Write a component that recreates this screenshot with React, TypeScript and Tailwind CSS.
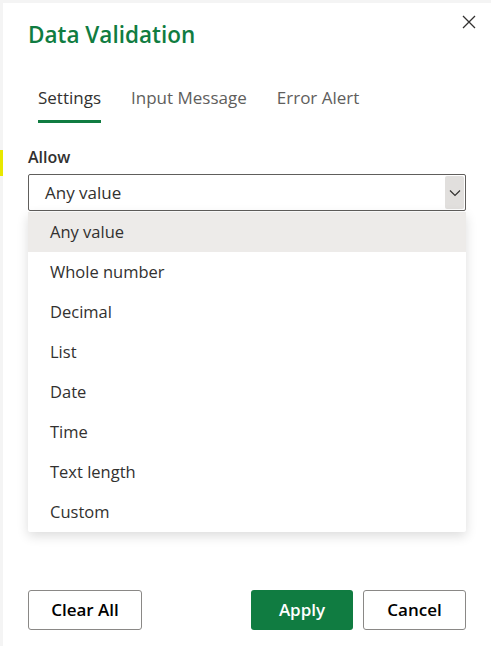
import { useState } from 'react';

const options = ['Any value', 'Whole number', 'Decimal', 'List', 'Date', 'Time', 'Text length', 'Custom'];

export default function App() {
  const [selected] = useState('Any value');

  return (
    <div className="flex h-[646px] w-[491px] overflow-hidden bg-[#f4f4f4] font-['Open_Sans',sans-serif] text-[#323130]">
      {/* sheet sliver behind the dialog */}
      <div className="flex w-[3px] shrink-0 flex-col">
        <div className="h-[150px]" />
        <div className="h-[26px] bg-[#e8e800]" />
      </div>
      <div className="mt-[3px] flex flex-1 flex-col bg-white pl-[25px] pr-[25px]">
        <div className="flex items-start justify-between">
          <h1 className="pt-[16px] text-[22.5px] font-semibold leading-[32px] text-[#107c41]">Data Validation</h1>
          <button className="mr-[-13px] mt-[9px] p-[2px] text-[#323130]">
            <svg width="16" height="16" viewBox="0 0 16 16" fill="none" stroke="currentColor" strokeWidth="1.3">
              <path d="M2 2L14 14M14 2L2 14" />
            </svg>
          </button>
        </div>

        {/* tabs */}
        <div className="mt-[35px] flex gap-[30px] pl-[10px] text-[17px]">
          <div className="flex flex-col">
            <span className="leading-[24px] text-[#323130]">Settings</span>
            <div className="mt-[10px] h-[3px] bg-[#107c41]" />
          </div>
          <span className="leading-[24px] text-[#605e5c]">Input Message</span>
          <span className="leading-[24px] text-[#605e5c]">Error Alert</span>
        </div>

        <div className="mt-[23px] text-[16px] font-semibold leading-[22px]">Allow</div>

        <div className="relative mt-[6px]">
          <div className="flex h-[37px] items-center justify-between rounded-[2px] border border-[#605e5c] bg-white pl-[16px] pr-[1px]">
            <span className="text-[17px]">{selected}</span>
            <div className="flex h-[33px] w-[19px] items-center justify-center rounded-[2px] bg-[#e1dfdd]">
              <svg width="12" height="8" viewBox="0 0 12 8" fill="none" stroke="#323130" strokeWidth="1.2">
                <path d="M1 1.5L6 6.5L11 1.5" />
              </svg>
            </div>
          </div>

          {/* dropdown list */}
          <div className="absolute left-0 right-0 top-[38px] z-10 flex flex-col rounded-b-[2px] bg-white shadow-[0_4px_12px_rgba(0,0,0,0.14)]">
            {options.map((opt) => (
              <div
                key={opt}
                className={`flex h-[40px] items-center pl-[22px] text-[16.5px] ${opt === selected ? 'bg-[#edebe9]' : ''}`}
              >
                {opt}
              </div>
            ))}
          </div>
        </div>

        <div className="flex-1" />

        <div className="mb-[16px] flex items-center text-[17px] font-semibold">
          <button className="h-[40px] w-[114px] rounded-[3px] border border-[#8a8886] bg-white text-black">Clear All</button>
          <div className="flex-1" />
          <button className="h-[40px] w-[102px] rounded-[3px] bg-[#107c41] text-white">Apply</button>
          <button className="ml-[10px] h-[40px] w-[103px] rounded-[3px] border border-[#8a8886] bg-white text-black">Cancel</button>
        </div>
      </div>
    </div>
  );
}
